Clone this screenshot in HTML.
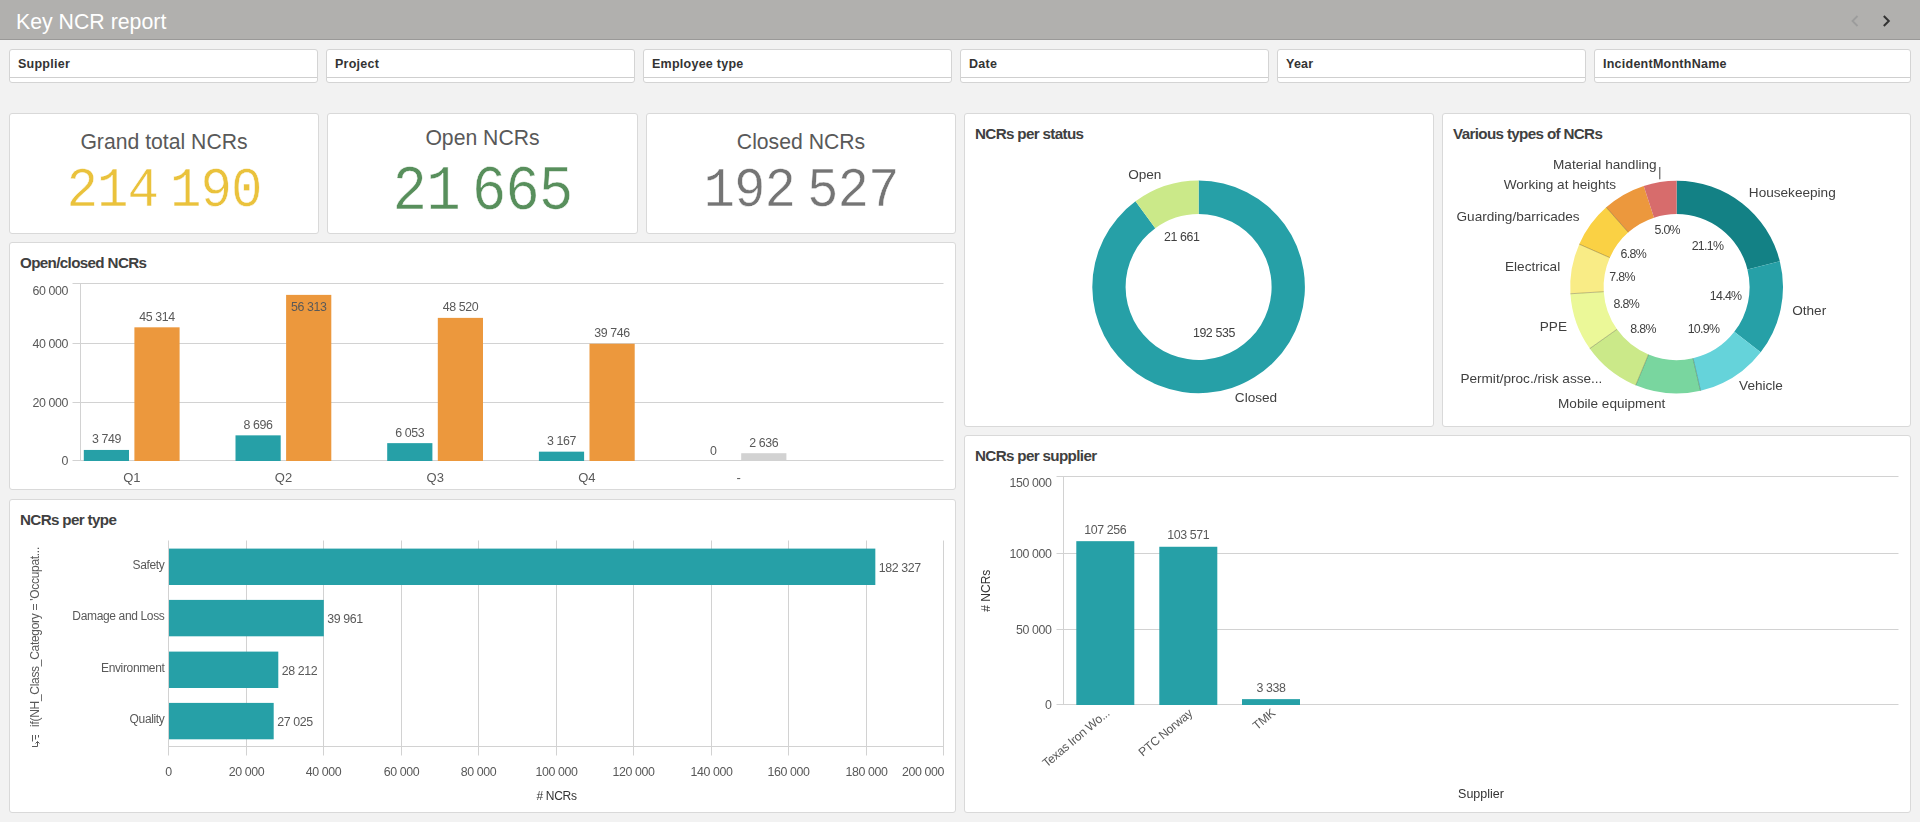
<!DOCTYPE html>
<html><head><meta charset="utf-8"><style>
html,body{margin:0;padding:0;}
body{width:1920px;height:822px;position:relative;overflow:hidden;background:#f2f2f2;font-family:"Liberation Sans",sans-serif;}
.hdr{position:absolute;left:0;top:0;width:1920px;height:39px;background:#b1b0ae;border-bottom:1px solid #9a9998;}
.hdr .t{position:absolute;left:16px;top:9px;font-size:21.3px;color:#fff;line-height:26px;}
.arr{position:absolute;top:14px;width:14px;height:14px;}
.flt{position:absolute;top:49px;height:34px;box-sizing:border-box;background:#fff;border:1px solid #d4d4d4;border-radius:3px;}
.flt:after{content:"";position:absolute;left:0;right:0;top:27px;height:1px;background:#cfcfcf;}
.flt span{position:absolute;left:8px;top:7px;font-size:12.5px;letter-spacing:0.25px;font-weight:bold;color:#333;line-height:15px;}
.pnl{position:absolute;box-sizing:border-box;background:#fff;border:1px solid #d9d9d9;border-radius:3px;}
.ttl{position:absolute;font-size:15.2px;letter-spacing:-0.65px;font-weight:bold;color:#404040;line-height:18px;white-space:nowrap;}
.kt{position:absolute;text-align:center;font-size:21.2px;color:#595959;line-height:26px;}
.kn{position:absolute;text-align:center;font-family:"Liberation Mono",monospace;letter-spacing:-1px;-webkit-text-stroke:0.5px #fff;}
.sp{font-size:20px;letter-spacing:0;}
</style></head><body>
<div class="hdr"><div class="t">Key NCR report</div>
<svg class="arr" style="left:1848px" viewBox="0 0 14 14"><path d="M9.5 2 L4.5 7 L9.5 12" stroke="#9c9c9c" stroke-width="1.8" fill="none"/></svg>
<svg class="arr" style="left:1880px" viewBox="0 0 14 14"><path d="M3.8 2 L8.8 7 L3.8 12" stroke="#333" stroke-width="2" fill="none"/></svg>
</div>
<div class="flt" style="left:9px;width:309px"><span>Supplier</span></div><div class="flt" style="left:326px;width:309px"><span>Project</span></div><div class="flt" style="left:643px;width:309px"><span>Employee type</span></div><div class="flt" style="left:960px;width:309px"><span>Date</span></div><div class="flt" style="left:1277px;width:309px"><span>Year</span></div><div class="flt" style="left:1594px;width:317px"><span>IncidentMonthName</span></div><div class="pnl" style="left:9px;top:113px;width:310px;height:121px"></div><div class="pnl" style="left:327px;top:113px;width:311px;height:121px"></div><div class="pnl" style="left:646px;top:113px;width:310px;height:121px"></div><div class="pnl" style="left:9px;top:242px;width:947px;height:248px"></div><div class="pnl" style="left:9px;top:499px;width:947px;height:314px"></div><div class="pnl" style="left:964px;top:113px;width:470px;height:314px"></div><div class="pnl" style="left:1442px;top:113px;width:469px;height:314px"></div><div class="pnl" style="left:964px;top:435px;width:947px;height:378px"></div><div class="ttl" style="left:20px;top:254.2px">Open/closed NCRs</div><div class="ttl" style="left:20px;top:510.6px">NCRs per type</div><div class="ttl" style="left:975px;top:124.5px">NCRs per status</div><div class="ttl" style="left:1453px;top:124.5px">Various types of NCRs</div><div class="ttl" style="left:975px;top:446.7px">NCRs per supplier</div><div class="kt" style="left:9px;width:310px;top:128.9px">Grand total NCRs</div><div class="kn" style="left:9px;width:310px;top:166.1px;color:#EAC23C;font-size:52.5px;line-height:52.5px;transform:scaleY(1.04)">214<span class="sp"> </span>190</div><div class="kt" style="left:327px;width:311px;top:125.2px">Open NCRs</div><div class="kn" style="left:327px;width:311px;top:164.0px;color:#588F5C;font-size:57.6px;line-height:57.6px;transform:scaleY(1.09)">21<span class="sp"> </span>665</div><div class="kt" style="left:646px;width:310px;top:128.9px">Closed NCRs</div><div class="kn" style="left:646px;width:310px;top:165.6px;color:#757575;font-size:52.5px;line-height:52.5px;transform:scaleY(1.04)">192<span class="sp"> </span>527</div><svg width="1920" height="822" style="position:absolute;left:0;top:0;will-change:transform"><line x1="72.5" y1="460.5" x2="943.5" y2="460.5" stroke="#d2d2d2" stroke-width="1"/><text x="68.0" y="465.0" font-size="12.4" text-anchor="end" fill="#595959" font-family='"Liberation Sans", sans-serif' font-weight="normal"  letter-spacing="-0.4">0</text><line x1="72.5" y1="402.5" x2="943.5" y2="402.5" stroke="#d2d2d2" stroke-width="1"/><text x="68.0" y="407.0" font-size="12.4" text-anchor="end" fill="#595959" font-family='"Liberation Sans", sans-serif' font-weight="normal"  letter-spacing="-0.4">20 000</text><line x1="72.5" y1="343.5" x2="943.5" y2="343.5" stroke="#d2d2d2" stroke-width="1"/><text x="68.0" y="348.0" font-size="12.4" text-anchor="end" fill="#595959" font-family='"Liberation Sans", sans-serif' font-weight="normal"  letter-spacing="-0.4">40 000</text><line x1="72.5" y1="283.5" x2="943.5" y2="283.5" stroke="#d2d2d2" stroke-width="1"/><text x="68.0" y="294.5" font-size="12.4" text-anchor="end" fill="#595959" font-family='"Liberation Sans", sans-serif' font-weight="normal"  letter-spacing="-0.4">60 000</text><line x1="80.5" y1="283.0" x2="80.5" y2="461.0" stroke="#d2d2d2" stroke-width="1"/><rect x="83.80" y="449.94" width="45.20" height="11.06" fill="#26A0A7"/><rect x="134.40" y="327.32" width="45.20" height="133.68" fill="#EC983D"/><text x="106.4" y="443.4" font-size="12.4" text-anchor="middle" fill="#595959" font-family='"Liberation Sans", sans-serif' font-weight="normal"  letter-spacing="-0.4">3 749</text><text x="157.0" y="320.8" font-size="12.4" text-anchor="middle" fill="#595959" font-family='"Liberation Sans", sans-serif' font-weight="normal"  letter-spacing="-0.4">45 314</text><text x="131.8" y="481.7" font-size="13" text-anchor="middle" fill="#595959" font-family='"Liberation Sans", sans-serif' font-weight="normal" >Q1</text><rect x="235.50" y="435.35" width="45.20" height="25.65" fill="#26A0A7"/><rect x="286.10" y="294.88" width="45.20" height="166.12" fill="#EC983D"/><text x="258.1" y="428.8" font-size="12.4" text-anchor="middle" fill="#595959" font-family='"Liberation Sans", sans-serif' font-weight="normal"  letter-spacing="-0.4">8 696</text><text x="308.7" y="310.5" font-size="12.4" text-anchor="middle" fill="#595959" font-family='"Liberation Sans", sans-serif' font-weight="normal"  letter-spacing="-0.4">56 313</text><text x="283.5" y="481.7" font-size="13" text-anchor="middle" fill="#595959" font-family='"Liberation Sans", sans-serif' font-weight="normal" >Q2</text><rect x="387.20" y="443.14" width="45.20" height="17.86" fill="#26A0A7"/><rect x="437.80" y="317.87" width="45.20" height="143.13" fill="#EC983D"/><text x="409.8" y="436.6" font-size="12.4" text-anchor="middle" fill="#595959" font-family='"Liberation Sans", sans-serif' font-weight="normal"  letter-spacing="-0.4">6 053</text><text x="460.4" y="311.3" font-size="12.4" text-anchor="middle" fill="#595959" font-family='"Liberation Sans", sans-serif' font-weight="normal"  letter-spacing="-0.4">48 520</text><text x="435.2" y="481.7" font-size="13" text-anchor="middle" fill="#595959" font-family='"Liberation Sans", sans-serif' font-weight="normal" >Q3</text><rect x="538.90" y="451.66" width="45.20" height="9.34" fill="#26A0A7"/><rect x="589.50" y="343.75" width="45.20" height="117.25" fill="#EC983D"/><text x="561.5" y="445.1" font-size="12.4" text-anchor="middle" fill="#595959" font-family='"Liberation Sans", sans-serif' font-weight="normal"  letter-spacing="-0.4">3 167</text><text x="612.1" y="337.2" font-size="12.4" text-anchor="middle" fill="#595959" font-family='"Liberation Sans", sans-serif' font-weight="normal"  letter-spacing="-0.4">39 746</text><text x="586.9" y="481.7" font-size="13" text-anchor="middle" fill="#595959" font-family='"Liberation Sans", sans-serif' font-weight="normal" >Q4</text><rect x="741.20" y="453.22" width="45.20" height="7.78" fill="#d2d2d2"/><text x="713.2" y="454.5" font-size="12.4" text-anchor="middle" fill="#595959" font-family='"Liberation Sans", sans-serif' font-weight="normal"  letter-spacing="-0.4">0</text><text x="763.8" y="446.7" font-size="12.4" text-anchor="middle" fill="#595959" font-family='"Liberation Sans", sans-serif' font-weight="normal"  letter-spacing="-0.4">2 636</text><text x="738.6" y="481.7" font-size="13" text-anchor="middle" fill="#595959" font-family='"Liberation Sans", sans-serif' font-weight="normal" >-</text><line x1="168.5" y1="540.5" x2="168.5" y2="755.5" stroke="#d2d2d2" stroke-width="1"/><text x="168.5" y="776.0" font-size="12.4" text-anchor="middle" fill="#595959" font-family='"Liberation Sans", sans-serif' font-weight="normal"  letter-spacing="-0.4">0</text><line x1="246.5" y1="540.5" x2="246.5" y2="755.5" stroke="#d2d2d2" stroke-width="1"/><text x="246.5" y="776.0" font-size="12.4" text-anchor="middle" fill="#595959" font-family='"Liberation Sans", sans-serif' font-weight="normal"  letter-spacing="-0.4">20 000</text><line x1="323.5" y1="540.5" x2="323.5" y2="755.5" stroke="#d2d2d2" stroke-width="1"/><text x="323.5" y="776.0" font-size="12.4" text-anchor="middle" fill="#595959" font-family='"Liberation Sans", sans-serif' font-weight="normal"  letter-spacing="-0.4">40 000</text><line x1="401.5" y1="540.5" x2="401.5" y2="755.5" stroke="#d2d2d2" stroke-width="1"/><text x="401.5" y="776.0" font-size="12.4" text-anchor="middle" fill="#595959" font-family='"Liberation Sans", sans-serif' font-weight="normal"  letter-spacing="-0.4">60 000</text><line x1="478.5" y1="540.5" x2="478.5" y2="755.5" stroke="#d2d2d2" stroke-width="1"/><text x="478.5" y="776.0" font-size="12.4" text-anchor="middle" fill="#595959" font-family='"Liberation Sans", sans-serif' font-weight="normal"  letter-spacing="-0.4">80 000</text><line x1="556.5" y1="540.5" x2="556.5" y2="755.5" stroke="#d2d2d2" stroke-width="1"/><text x="556.5" y="776.0" font-size="12.4" text-anchor="middle" fill="#595959" font-family='"Liberation Sans", sans-serif' font-weight="normal"  letter-spacing="-0.4">100 000</text><line x1="633.5" y1="540.5" x2="633.5" y2="755.5" stroke="#d2d2d2" stroke-width="1"/><text x="633.5" y="776.0" font-size="12.4" text-anchor="middle" fill="#595959" font-family='"Liberation Sans", sans-serif' font-weight="normal"  letter-spacing="-0.4">120 000</text><line x1="711.5" y1="540.5" x2="711.5" y2="755.5" stroke="#d2d2d2" stroke-width="1"/><text x="711.5" y="776.0" font-size="12.4" text-anchor="middle" fill="#595959" font-family='"Liberation Sans", sans-serif' font-weight="normal"  letter-spacing="-0.4">140 000</text><line x1="788.5" y1="540.5" x2="788.5" y2="755.5" stroke="#d2d2d2" stroke-width="1"/><text x="788.5" y="776.0" font-size="12.4" text-anchor="middle" fill="#595959" font-family='"Liberation Sans", sans-serif' font-weight="normal"  letter-spacing="-0.4">160 000</text><line x1="866.5" y1="540.5" x2="866.5" y2="755.5" stroke="#d2d2d2" stroke-width="1"/><text x="866.5" y="776.0" font-size="12.4" text-anchor="middle" fill="#595959" font-family='"Liberation Sans", sans-serif' font-weight="normal"  letter-spacing="-0.4">180 000</text><line x1="943.5" y1="540.5" x2="943.5" y2="755.5" stroke="#d2d2d2" stroke-width="1"/><text x="944.0" y="776.0" font-size="12.4" text-anchor="end" fill="#595959" font-family='"Liberation Sans", sans-serif' font-weight="normal"  letter-spacing="-0.4">200 000</text><line x1="168.0" y1="746.5" x2="944.0" y2="746.5" stroke="#d2d2d2" stroke-width="1"/><rect x="169.00" y="548.60" width="706.33" height="36.40" fill="#26A0A7"/><text x="164.5" y="568.6" font-size="12" text-anchor="end" fill="#595959" font-family='"Liberation Sans", sans-serif' font-weight="normal" letter-spacing="-0.35">Safety</text><text x="878.8" y="571.6" font-size="12.4" text-anchor="start" fill="#595959" font-family='"Liberation Sans", sans-serif' font-weight="normal"  letter-spacing="-0.4">182 327</text><rect x="169.00" y="599.90" width="154.81" height="36.40" fill="#26A0A7"/><text x="164.5" y="619.9" font-size="12" text-anchor="end" fill="#595959" font-family='"Liberation Sans", sans-serif' font-weight="normal" letter-spacing="-0.35">Damage and Loss</text><text x="327.3" y="622.9" font-size="12.4" text-anchor="start" fill="#595959" font-family='"Liberation Sans", sans-serif' font-weight="normal"  letter-spacing="-0.4">39 961</text><rect x="169.00" y="651.60" width="109.29" height="36.40" fill="#26A0A7"/><text x="164.5" y="671.6" font-size="12" text-anchor="end" fill="#595959" font-family='"Liberation Sans", sans-serif' font-weight="normal" letter-spacing="-0.35">Environment</text><text x="281.8" y="674.6" font-size="12.4" text-anchor="start" fill="#595959" font-family='"Liberation Sans", sans-serif' font-weight="normal"  letter-spacing="-0.4">28 212</text><rect x="169.00" y="702.90" width="104.69" height="36.40" fill="#26A0A7"/><text x="164.5" y="722.9" font-size="12" text-anchor="end" fill="#595959" font-family='"Liberation Sans", sans-serif' font-weight="normal" letter-spacing="-0.35">Quality</text><text x="277.2" y="725.9" font-size="12.4" text-anchor="start" fill="#595959" font-family='"Liberation Sans", sans-serif' font-weight="normal"  letter-spacing="-0.4">27 025</text><text x="556.5" y="800.0" font-size="12" text-anchor="middle" fill="#333" font-family='"Liberation Sans", sans-serif' font-weight="normal" letter-spacing="-0.3"># NCRs</text><g transform="translate(39 637) rotate(-90)"><text x="0" y="0" font-size="12" letter-spacing="-0.3" text-anchor="middle" fill="#595959" font-family='"Liberation Sans", sans-serif'>if(NH_Class_Category = 'Occupat...</text></g><g stroke="#595959" stroke-width="1" fill="none"><path d="M32.5 735V741.5M35.5 735V739.5M38.5 735V737.5M32 746.5H37.5V741.5M35.5 743.5L37.5 741.5L39.5 743.5"/></g><path fill="#26A0A7" d="M1198.60 180.60A106.30 106.30 0 1 1 1135.52 201.34L1155.28 228.14A73.00 73.00 0 1 0 1198.60 213.90Z"/><path fill="#CBE989" d="M1135.52 201.34A106.30 106.30 0 0 1 1198.60 180.60L1198.60 213.90A73.00 73.00 0 0 0 1155.28 228.14Z"/><text x="1144.8" y="179.3" font-size="13.6" text-anchor="middle" fill="#404040" font-family='"Liberation Sans", sans-serif' font-weight="normal" >Open</text><text x="1256.0" y="402.1" font-size="13.6" text-anchor="middle" fill="#404040" font-family='"Liberation Sans", sans-serif' font-weight="normal" >Closed</text><text x="1181.7" y="241.1" font-size="12.4" text-anchor="middle" fill="#404040" font-family='"Liberation Sans", sans-serif' font-weight="normal"  letter-spacing="-0.4">21 661</text><text x="1213.9" y="337.0" font-size="12.4" text-anchor="middle" fill="#404040" font-family='"Liberation Sans", sans-serif' font-weight="normal"  letter-spacing="-0.4">192 535</text><path fill="#138185" d="M1676.60 180.70A106.40 106.40 0 0 1 1779.82 261.29L1747.42 269.39A73.00 73.00 0 0 0 1676.60 214.10Z"/><path fill="#26A0A7" d="M1779.82 261.29A106.40 106.40 0 0 1 1760.67 352.31L1734.28 331.84A73.00 73.00 0 0 0 1747.42 269.39Z"/><path fill="#65D3DA" d="M1760.67 352.31A106.40 106.40 0 0 1 1700.53 390.77L1693.02 358.23A73.00 73.00 0 0 0 1734.28 331.84Z"/><path fill="#79D69F" d="M1700.53 390.77A106.40 106.40 0 0 1 1635.71 385.33L1648.55 354.49A73.00 73.00 0 0 0 1693.02 358.23Z"/><path fill="#CBE989" d="M1635.71 385.33A106.40 106.40 0 0 1 1589.76 348.58L1617.02 329.28A73.00 73.00 0 0 0 1648.55 354.49Z"/><path fill="#EBF898" d="M1589.76 348.58A106.40 106.40 0 0 1 1570.41 293.78L1603.74 291.68A73.00 73.00 0 0 0 1617.02 329.28Z"/><path fill="#F9EC86" d="M1570.41 293.78A106.40 106.40 0 0 1 1579.25 244.16L1609.81 257.64A73.00 73.00 0 0 0 1603.74 291.68Z"/><path fill="#FAD144" d="M1579.25 244.16A106.40 106.40 0 0 1 1606.24 207.29L1628.32 232.34A73.00 73.00 0 0 0 1609.81 257.64Z"/><path fill="#EC983D" d="M1606.24 207.29A106.40 106.40 0 0 1 1643.72 185.91L1654.04 217.67A73.00 73.00 0 0 0 1628.32 232.34Z"/><path fill="#D76C6C" d="M1643.72 185.91A106.40 106.40 0 0 1 1676.60 180.70L1676.60 214.10A73.00 73.00 0 0 0 1654.04 217.67Z"/><line x1="1693.02" y1="358.23" x2="1700.53" y2="390.77" stroke="rgba(0,0,0,0.3)" stroke-width="0.8"/><line x1="1648.55" y1="354.49" x2="1635.71" y2="385.33" stroke="rgba(0,0,0,0.3)" stroke-width="0.8"/><line x1="1617.02" y1="329.28" x2="1589.76" y2="348.58" stroke="rgba(0,0,0,0.3)" stroke-width="0.8"/><line x1="1603.74" y1="291.68" x2="1570.41" y2="293.78" stroke="rgba(0,0,0,0.3)" stroke-width="0.8"/><line x1="1609.81" y1="257.64" x2="1579.25" y2="244.16" stroke="rgba(0,0,0,0.3)" stroke-width="0.8"/><line x1="1628.32" y1="232.34" x2="1606.24" y2="207.29" stroke="rgba(0,0,0,0.3)" stroke-width="0.8"/><text x="1604.8" y="169.3" font-size="13.6" text-anchor="middle" fill="#404040" font-family='"Liberation Sans", sans-serif' font-weight="normal" >Material handling</text><text x="1559.9" y="189.0" font-size="13.6" text-anchor="middle" fill="#404040" font-family='"Liberation Sans", sans-serif' font-weight="normal" >Working at heights</text><text x="1518.1" y="221.1" font-size="13.6" text-anchor="middle" fill="#404040" font-family='"Liberation Sans", sans-serif' font-weight="normal" >Guarding/barricades</text><text x="1532.6" y="270.5" font-size="13.6" text-anchor="middle" fill="#404040" font-family='"Liberation Sans", sans-serif' font-weight="normal" >Electrical</text><text x="1553.4" y="330.7" font-size="13.6" text-anchor="middle" fill="#404040" font-family='"Liberation Sans", sans-serif' font-weight="normal" >PPE</text><text x="1531.4" y="382.9" font-size="13.6" text-anchor="middle" fill="#404040" font-family='"Liberation Sans", sans-serif' font-weight="normal" >Permit/proc./risk asse...</text><text x="1611.7" y="408.2" font-size="13.6" text-anchor="middle" fill="#404040" font-family='"Liberation Sans", sans-serif' font-weight="normal" >Mobile equipment</text><text x="1761.0" y="389.8" font-size="13.6" text-anchor="middle" fill="#404040" font-family='"Liberation Sans", sans-serif' font-weight="normal" >Vehicle</text><text x="1809.2" y="315.1" font-size="13.6" text-anchor="middle" fill="#404040" font-family='"Liberation Sans", sans-serif' font-weight="normal" >Other</text><text x="1792.3" y="197.4" font-size="13.6" text-anchor="middle" fill="#404040" font-family='"Liberation Sans", sans-serif' font-weight="normal" >Housekeeping</text><line x1="1659.8" y1="167.0" x2="1659.8" y2="179.3" stroke="#404040" stroke-width="1"/><text x="1667.2" y="234.1" font-size="12.4" text-anchor="middle" fill="#404040" font-family='"Liberation Sans", sans-serif' font-weight="normal" letter-spacing="-0.7">5.0%</text><text x="1707.5" y="250.0" font-size="12.4" text-anchor="middle" fill="#404040" font-family='"Liberation Sans", sans-serif' font-weight="normal" letter-spacing="-0.7">21.1%</text><text x="1633.3" y="258.4" font-size="12.4" text-anchor="middle" fill="#404040" font-family='"Liberation Sans", sans-serif' font-weight="normal" letter-spacing="-0.7">6.8%</text><text x="1622.1" y="280.8" font-size="12.4" text-anchor="middle" fill="#404040" font-family='"Liberation Sans", sans-serif' font-weight="normal" letter-spacing="-0.7">7.8%</text><text x="1725.6" y="300.4" font-size="12.4" text-anchor="middle" fill="#404040" font-family='"Liberation Sans", sans-serif' font-weight="normal" letter-spacing="-0.7">14.4%</text><text x="1626.3" y="308.2" font-size="12.4" text-anchor="middle" fill="#404040" font-family='"Liberation Sans", sans-serif' font-weight="normal" letter-spacing="-0.7">8.8%</text><text x="1643.1" y="332.6" font-size="12.4" text-anchor="middle" fill="#404040" font-family='"Liberation Sans", sans-serif' font-weight="normal" letter-spacing="-0.7">8.8%</text><text x="1703.5" y="333.1" font-size="12.4" text-anchor="middle" fill="#404040" font-family='"Liberation Sans", sans-serif' font-weight="normal" letter-spacing="-0.7">10.9%</text><line x1="1056.5" y1="704.5" x2="1898.5" y2="704.5" stroke="#d2d2d2" stroke-width="1"/><text x="1051.6" y="709.0" font-size="12.4" text-anchor="end" fill="#595959" font-family='"Liberation Sans", sans-serif' font-weight="normal"  letter-spacing="-0.4">0</text><line x1="1056.5" y1="629.5" x2="1898.5" y2="629.5" stroke="#d2d2d2" stroke-width="1"/><text x="1051.6" y="634.0" font-size="12.4" text-anchor="end" fill="#595959" font-family='"Liberation Sans", sans-serif' font-weight="normal"  letter-spacing="-0.4">50 000</text><line x1="1056.5" y1="553.5" x2="1898.5" y2="553.5" stroke="#d2d2d2" stroke-width="1"/><text x="1051.6" y="558.0" font-size="12.4" text-anchor="end" fill="#595959" font-family='"Liberation Sans", sans-serif' font-weight="normal"  letter-spacing="-0.4">100 000</text><line x1="1056.5" y1="476.5" x2="1898.5" y2="476.5" stroke="#d2d2d2" stroke-width="1"/><text x="1051.6" y="487.0" font-size="12.4" text-anchor="end" fill="#595959" font-family='"Liberation Sans", sans-serif' font-weight="normal"  letter-spacing="-0.4">150 000</text><line x1="1063.5" y1="476.0" x2="1063.5" y2="705.0" stroke="#d2d2d2" stroke-width="1"/><rect x="1076.30" y="541.17" width="58.00" height="163.83" fill="#26A0A7"/><text x="1105.3" y="533.6" font-size="12.4" text-anchor="middle" fill="#595959" font-family='"Liberation Sans", sans-serif' font-weight="normal"  letter-spacing="-0.4">107 256</text><g transform="translate(1110.3 714.5) rotate(-40)"><text x="0" y="0" font-size="12.2" letter-spacing="-0.3" text-anchor="end" fill="#595959" font-family='"Liberation Sans", sans-serif'>Texas Iron Wo...</text></g><rect x="1159.30" y="546.77" width="58.00" height="158.23" fill="#26A0A7"/><text x="1188.3" y="539.2" font-size="12.4" text-anchor="middle" fill="#595959" font-family='"Liberation Sans", sans-serif' font-weight="normal"  letter-spacing="-0.4">103 571</text><g transform="translate(1193.3 714.5) rotate(-40)"><text x="0" y="0" font-size="12.2" letter-spacing="-0.3" text-anchor="end" fill="#595959" font-family='"Liberation Sans", sans-serif'>PTC Norway</text></g><rect x="1242.00" y="699.13" width="58.00" height="5.87" fill="#26A0A7"/><text x="1271.0" y="691.6" font-size="12.4" text-anchor="middle" fill="#595959" font-family='"Liberation Sans", sans-serif' font-weight="normal"  letter-spacing="-0.4">3 338</text><g transform="translate(1276.0 714.5) rotate(-40)"><text x="0" y="0" font-size="12.2" letter-spacing="-0.3" text-anchor="end" fill="#595959" font-family='"Liberation Sans", sans-serif'>TMK</text></g><g transform="translate(989.5 590.7) rotate(-90)"><text x="0" y="0" font-size="12" text-anchor="middle" fill="#333" font-family='"Liberation Sans", sans-serif'># NCRs</text></g><text x="1481.0" y="797.5" font-size="12.5" text-anchor="middle" fill="#333" font-family='"Liberation Sans", sans-serif' font-weight="normal" >Supplier</text></svg>
</body></html>
